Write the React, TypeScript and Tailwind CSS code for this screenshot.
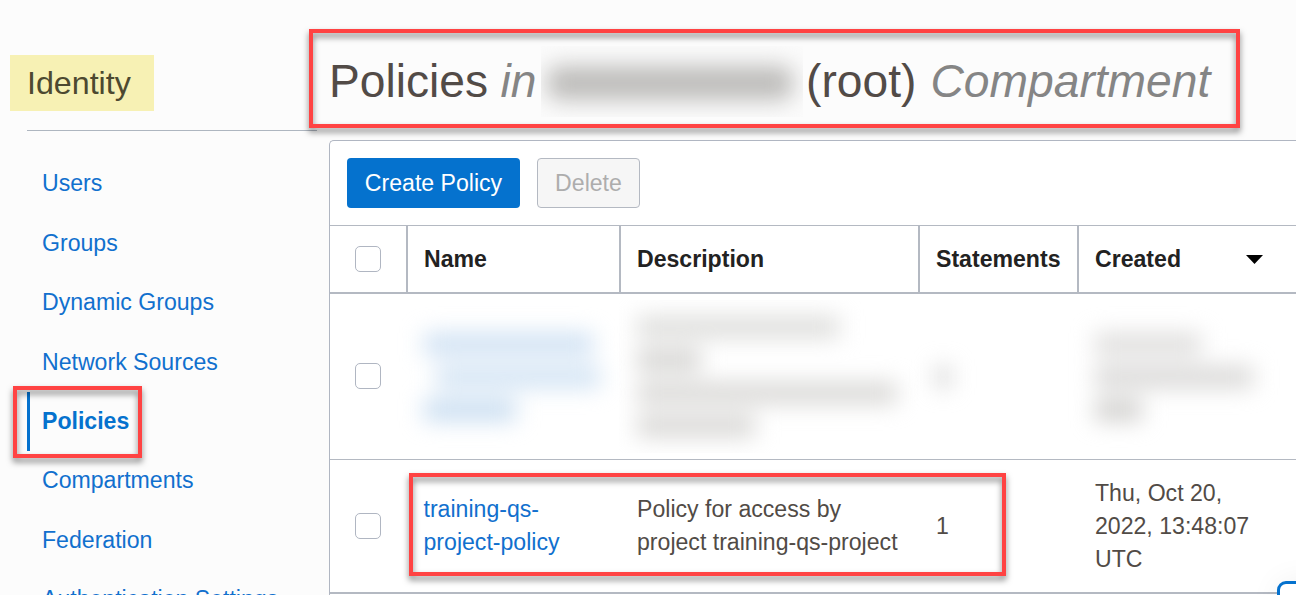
import type { ReactNode } from "react";

const navItems = [
  "Users",
  "Groups",
  "Dynamic Groups",
  "Network Sources",
  "Policies",
  "Compartments",
  "Federation",
  "Authentication Settings",
];

function Sidebar() {
  return (
    <aside className="flex h-full w-[329px] shrink-0 flex-col pt-[55px]">
      <h2 className="ml-[10px] flex h-14 w-36 shrink-0 items-center bg-[#f7f1b4] pl-[17px] text-[32.2px] leading-none text-[#4d4930]">
        Identity
      </h2>
      <div className="mt-[19px] ml-[27px] h-px w-[290px] shrink-0 bg-[#aeb6c0]" />
      <nav className="mt-[23.2px] ml-[27px] flex shrink-0 flex-col">
        {navItems.map((item) => (
          <a
            key={item}
            className={
              item === "Policies"
                ? "flex h-[59.4px] shrink-0 items-center border-l-[3px] border-[#0572ce] pl-3 font-bold text-[#0572ce]"
                : "flex h-[59.4px] shrink-0 items-center pl-[15px] text-[#1170ce]"
            }
          >
            {item}
          </a>
        ))}
      </nav>
    </aside>
  );
}

function Checkbox() {
  return <span className="block size-[26px] rounded-[5px] border border-[#b0b6c2] bg-white" />;
}

function HeaderCell({ children, className }: { children: ReactNode; className: string }) {
  return (
    <div className={`flex items-center border-l-2 border-[#b4b9c2] pl-4 font-bold text-[#222] ${className}`}>
      {children}
    </div>
  );
}

function Redacted({ lines, className }: { lines: string[]; className: string }) {
  return (
    <div className={`flex flex-col gap-[11px] blur-[11px] ${className}`}>
      {lines.map((line, i) => (
        <span key={i} className={`h-[22px] ${line}`} />
      ))}
    </div>
  );
}

function Highlight({ className }: { className: string }) {
  return (
    <div
      className={`pointer-events-none absolute border-4 border-[#ff4343] drop-shadow-[0_4px_3px_rgba(0,0,0,0.5)] ${className}`}
    />
  );
}

const columns = "grid grid-cols-[76px_213px_299px_159px_1fr]";

export default function App() {
  return (
    <div className="relative flex h-[595px] w-[1296px] overflow-hidden bg-[#fcfcfc] font-['Liberation_Sans',Arial,sans-serif] text-[23.1px] leading-[33px]">
      <Sidebar />
      <main className="flex min-w-0 flex-1 flex-col">
        <h1 className="flex h-[140px] shrink-0 items-center pt-[22px] text-[46.2px] leading-[52px] whitespace-pre text-[#524b47]">
          <span className="w-[171.5px]">Policies </span>
          <em className="w-[40.5px] text-[#858585]">in</em>
          <span className="flex h-[71px] w-[262px] items-center overflow-hidden bg-[#fbfbfb] pl-[6px]">
            <span className="mt-1 h-[34px] w-[246px] rounded-xl bg-[#bdbcba] blur-[11px]" />
          </span>
          <span className="ml-[3px] w-[124.5px]">(root) </span>
          <em className="text-[#858585]">Compartment</em>
        </h1>

        <section className="flex flex-1 flex-col rounded-tl-[5px] border-t border-l border-[#b0b6c2] bg-white">
          <div className="flex h-[84px] shrink-0 gap-[17px] pt-[17px] pl-[17px]">
            <button className="h-[50px] w-[173px] rounded-[4px] bg-[#0572ce] text-white">Create Policy</button>
            <button className="h-[50px] w-[103px] rounded-[4px] border border-[#b4b9c2] bg-[#f6f6f6] text-[#adadad]">
              Delete
            </button>
          </div>

          <div className={`h-[69px] shrink-0 border-t border-b-2 border-[#b4b9c2] ${columns}`}>
            <div className="flex items-center pl-[25px]">
              <Checkbox />
            </div>
            <HeaderCell className="">Name</HeaderCell>
            <HeaderCell className="">Description</HeaderCell>
            <HeaderCell className="">Statements</HeaderCell>
            <HeaderCell className="justify-between pr-[33px]">
              Created
              <svg width="17" height="9" viewBox="0 0 17 9">
                <path d="M0 0h17L8.5 9z" fill="#000" />
              </svg>
            </HeaderCell>
          </div>

          <div className={`h-[166px] shrink-0 border-b border-[#b4b9c2] ${columns}`}>
            <div className="flex items-center pb-px pl-[25px]">
              <Checkbox />
            </div>
            <div className="flex items-center pl-[18px]">
              <Redacted
                className="w-[180px]"
                lines={["w-[169px] bg-[#cfe1f3]", "ml-[12px] w-[164px] bg-[#d3e4f4]", "w-[92px] bg-[#cadef1]"]}
              />
            </div>
            <div className="my-[6px] flex items-center overflow-hidden pl-[18px]">
              <Redacted
                className="w-[262px] shrink-0"
                lines={[
                  "w-[202px] bg-[#dededc]",
                  "w-[64px] bg-[#d6d5d3]",
                  "w-[260px] bg-[#dad9d7]",
                  "w-[118px] bg-[#d9d8d6]",
                ]}
              />
            </div>
            <div className="flex items-center pl-[18px]">
              <Redacted className="" lines={["w-[14px] bg-[#d2d2d2]"]} />
            </div>
            <div className="flex items-center pl-[18px]">
              <Redacted
                className="w-[160px]"
                lines={["w-[106px] bg-[#dfdedd]", "w-[158px] bg-[#dad9d8]", "w-[47px] bg-[#d2d1cf]"]}
              />
            </div>
          </div>

          <div className={`h-[134px] shrink-0 border-b-2 border-[#b4b9c2] text-[#514b46] ${columns}`}>
            <div className="flex items-center pl-[25px]">
              <Checkbox />
            </div>
            <div className="flex items-center pl-[17.5px]">
              <a className="text-[#1170ce]">
                training-qs-
                <br />
                project-policy
              </a>
            </div>
            <div className="flex items-center pl-[18px] whitespace-nowrap">
              <p>
                Policy for access by
                <br />
                project training-qs-project
              </p>
            </div>
            <div className="flex items-center pl-[18px]">1</div>
            <div className="flex items-center pl-[18px]">
              <p>
                Thu, Oct 20,
                <br />
                2022, 13:48:07
                <br />
                UTC
              </p>
            </div>
          </div>
        </section>
      </main>

      <div className="absolute top-[581px] left-[1277px] h-16 w-16 rounded-[9px] border-[3px] border-[#0572ce] bg-white shadow-[0_0_30px_rgba(0,0,0,0.06)]" />

      <Highlight className="top-[29px] left-[309px] h-[99px] w-[931px]" />
      <Highlight className="top-[386px] left-[13px] h-[72px] w-[129px]" />
      <Highlight className="top-[473px] left-[409px] h-[103px] w-[597px]" />
    </div>
  );
}
